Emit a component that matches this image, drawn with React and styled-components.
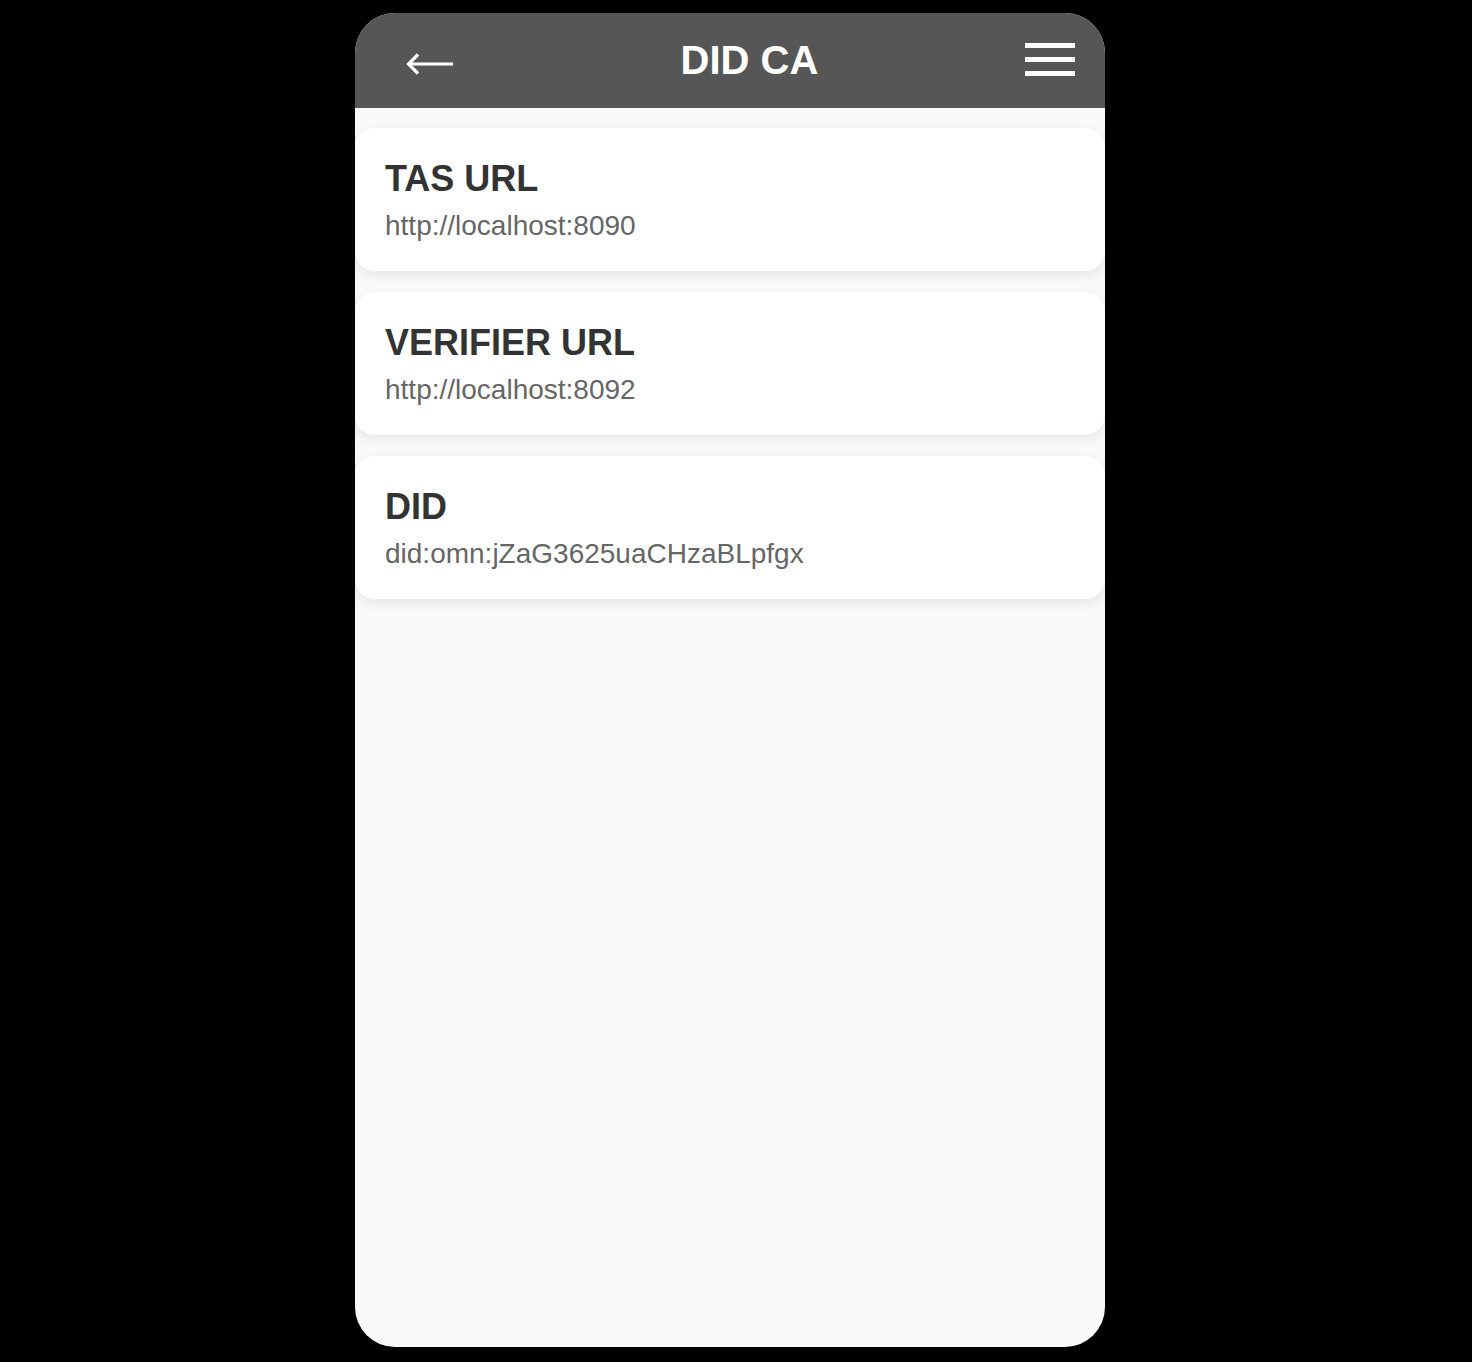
import React from "react";
import styled, { createGlobalStyle } from "styled-components";

const GlobalStyle = createGlobalStyle`
  html, body {
    margin: 0;
    padding: 0;
    background: #000;
    font-family: "Liberation Sans", Arial, sans-serif;
  }
  * { box-sizing: border-box; }
`;

const Page = styled.div`
  min-height: 1362px;
  padding: 13px 0 15px 355px;
  background: #000;
`;

const Phone = styled.div`
  width: 750px;
  height: 1334px;
  border-radius: 40px;
  overflow: hidden;
  background: #f9f9f9;
  display: flex;
  flex-direction: column;
`;

const Header = styled.header`
  height: 95px;
  flex: 0 0 auto;
  background: #565656;
  display: flex;
  align-items: center;
  padding: 0 30px 2px 30px;
`;

const BackButton = styled.button`
  width: 89px;
  height: 40px;
  padding: 0;
  border: 0;
  background: transparent;
  display: flex;
  align-items: center;
  justify-content: center;
  cursor: pointer;
  margin-top: 8px;
`;

const Title = styled.h1`
  flex: 1;
  margin: 0;
  text-align: center;
  color: #fff;
  font-size: 40px;
  line-height: 46px;
  font-weight: 700;
`;

const MenuButton = styled.button`
  width: 50px;
  padding: 0;
  border: 0;
  background: transparent;
  display: flex;
  flex-direction: column;
  gap: 9px;
  cursor: pointer;
`;

const Bar = styled.span`
  display: block;
  width: 50px;
  height: 5px;
  background: #fff;
`;

const List = styled.main`
  display: flex;
  flex-direction: column;
  gap: 21px;
  padding-top: 20px;
`;

const Card = styled.section`
  background: #fff;
  border-radius: 20px;
  padding: 31px 30px 29px;
  box-shadow: 0 4px 12px rgba(0, 0, 0, 0.08);
`;

const Label = styled.h2`
  margin: 0;
  color: #333;
  font-size: 36px;
  line-height: 40px;
  font-weight: 700;
`;

const Value = styled.p`
  margin: 11px 0 0;
  color: #666;
  font-size: 28px;
  line-height: 32px;
`;

const items = [
  { label: "TAS URL", value: "http://localhost:8090" },
  { label: "VERIFIER URL", value: "http://localhost:8092" },
  { label: "DID", value: "did:omn:jZaG3625uaCHzaBLpfgx" },
];

export default function App() {
  return (
    <>
      <GlobalStyle />
      <Page>
        <Phone>
          <Header>
            <BackButton aria-label="back">
              <svg width="48" height="22" viewBox="0 0 48 22" fill="none">
                <path d="M3 11 H47" stroke="#fff" strokeWidth="3.2" />
                <path
                  d="M12 1.5 L2.5 11 L12 20.5"
                  stroke="#fff"
                  strokeWidth="3.2"
                  fill="none"
                  strokeLinejoin="miter"
                />
              </svg>
            </BackButton>
            <Title>DID CA</Title>
            <MenuButton aria-label="menu">
              <Bar />
              <Bar />
              <Bar />
            </MenuButton>
          </Header>
          <List>
            {items.map((it) => (
              <Card key={it.label}>
                <Label>{it.label}</Label>
                <Value>{it.value}</Value>
              </Card>
            ))}
          </List>
        </Phone>
      </Page>
    </>
  );
}
